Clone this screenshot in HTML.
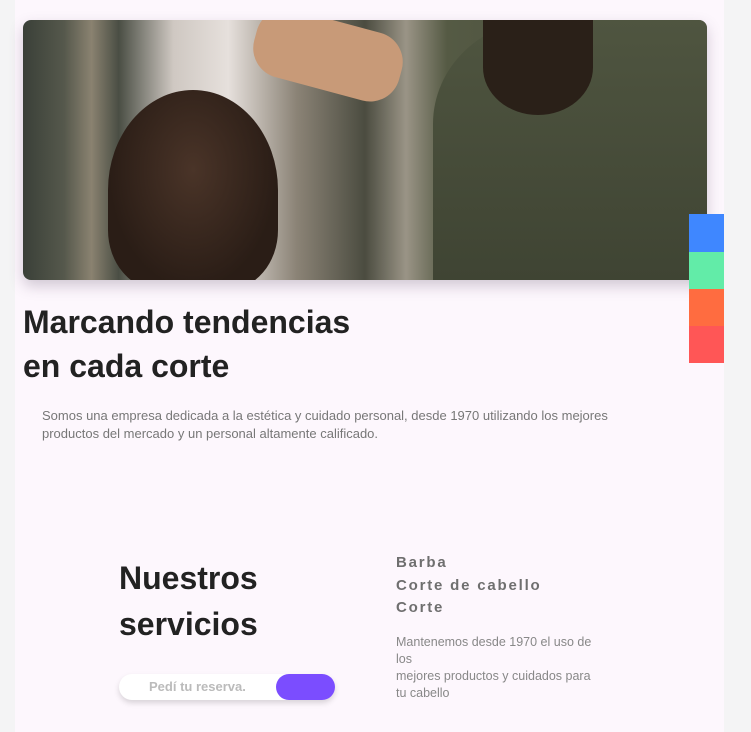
<!DOCTYPE html>
<html><head><meta charset="utf-8"><style>
*{margin:0;padding:0;box-sizing:border-box}
body{width:751px;height:732px;background:#f4f4f5;font-family:"Liberation Sans",sans-serif;position:relative;overflow:hidden}
.panel{position:absolute;left:15px;top:0;width:709px;height:732px;background:#fdf7fd}
.img{position:absolute;left:23px;top:20px;width:684px;height:260px;border-radius:8px;overflow:hidden;box-shadow:0 6px 14px rgba(80,60,90,.25);
background:linear-gradient(90deg,#3a4038 0%,#55584c 6%,#8a8270 10%,#4a4e44 14%,#cfc8c2 22%,#e6e0dc 30%,#8b8376 40%,#4b4c40 50%,#9a9486 56%,#555a44 62%,#4d5340 80%,#5a6048 92%,#9c9890 100%)}
.blk{position:absolute}
h1{position:absolute;left:23px;top:300px;font-size:32px;line-height:44px;font-weight:bold;color:#222}
p.d{position:absolute;left:42px;top:407px;width:620px;font-size:13px;line-height:18px;color:#777}
h2{position:absolute;left:119px;top:555px;font-size:32px;line-height:46px;font-weight:bold;color:#222}
.btn{position:absolute;left:119px;top:674px;width:216px;height:26px;border-radius:13px;background:#fff;box-shadow:0 3px 6px rgba(0,0,0,.15)}
.btn span{position:absolute;left:30px;top:5px;font-size:13px;font-weight:bold;color:#bbb}
.btn i{position:absolute;right:0;top:0;width:59px;height:26px;border-radius:13px;background:#7b4dff}
.svc{position:absolute;left:396px;top:552px;font-size:15px;line-height:22.5px;font-weight:bold;color:#6f6f6f;letter-spacing:1.8px}
.sd{position:absolute;left:396px;top:634px;width:205px;font-size:12.5px;line-height:17px;color:#888}
</style></head><body>
<div class="panel"></div>
<div class="img">
<div class="blk" style="left:85px;top:70px;width:170px;height:200px;border-radius:50% 50% 30% 30%;background:radial-gradient(ellipse at 50% 40%,#4a3428,#2a1d16 70%)"></div>
<div class="blk" style="left:230px;top:0;width:150px;height:70px;background:#c89a78;border-radius:30px;transform:rotate(15deg)"></div>
<div class="blk" style="left:410px;top:0;width:274px;height:260px;background:linear-gradient(180deg,#4f5540,#3f4433);border-radius:40% 0 0 0"></div>
<div class="blk" style="left:460px;top:0;width:110px;height:95px;background:#2a2018;border-radius:0 0 50% 50%"></div>
</div>
<div class="blk" style="left:689px;top:214px;width:35px;height:38px;background:#3f87ff"></div>
<div class="blk" style="left:689px;top:252px;width:35px;height:37px;background:#62eca8"></div>
<div class="blk" style="left:689px;top:289px;width:35px;height:37px;background:#ff6c40"></div>
<div class="blk" style="left:689px;top:326px;width:35px;height:37px;background:#ff5656"></div>
<h1>Marcando tendencias<br>en cada corte</h1>
<p class="d">Somos una empresa dedicada a la estética y cuidado personal, desde 1970 utilizando los mejores productos del mercado y un personal altamente calificado.</p>
<h2>Nuestros<br>servicios</h2>
<div class="btn"><span>Pedí tu reserva.</span><i></i></div>
<div class="svc">Barba<br>Corte de cabello<br>Corte</div>
<div class="sd">Mantenemos desde 1970 el uso de los<br>mejores productos y cuidados para tu cabello</div>
</body></html>
